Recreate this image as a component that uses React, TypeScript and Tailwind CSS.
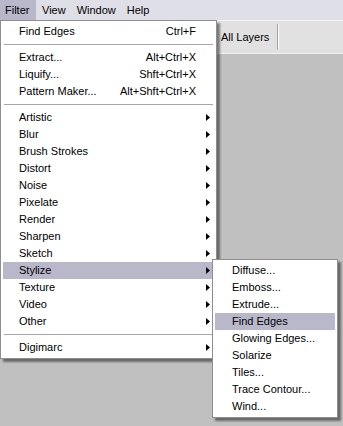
import React from 'react';

type Item =
  | { kind: 'item'; label: string; shortcut?: string; sub?: boolean; active?: boolean }
  | { kind: 'sep' };

const mainItems: Item[] = [
  { kind: 'item', label: 'Find Edges', shortcut: 'Ctrl+F' },
  { kind: 'sep' },
  { kind: 'item', label: 'Extract...', shortcut: 'Alt+Ctrl+X' },
  { kind: 'item', label: 'Liquify...', shortcut: 'Shft+Ctrl+X' },
  { kind: 'item', label: 'Pattern Maker...', shortcut: 'Alt+Shft+Ctrl+X' },
  { kind: 'sep' },
  { kind: 'item', label: 'Artistic', sub: true },
  { kind: 'item', label: 'Blur', sub: true },
  { kind: 'item', label: 'Brush Strokes', sub: true },
  { kind: 'item', label: 'Distort', sub: true },
  { kind: 'item', label: 'Noise', sub: true },
  { kind: 'item', label: 'Pixelate', sub: true },
  { kind: 'item', label: 'Render', sub: true },
  { kind: 'item', label: 'Sharpen', sub: true },
  { kind: 'item', label: 'Sketch', sub: true },
  { kind: 'item', label: 'Stylize', sub: true, active: true },
  { kind: 'item', label: 'Texture', sub: true },
  { kind: 'item', label: 'Video', sub: true },
  { kind: 'item', label: 'Other', sub: true },
  { kind: 'sep' },
  { kind: 'item', label: 'Digimarc', sub: true },
];

const stylizeItems = [
  'Diffuse...',
  'Emboss...',
  'Extrude...',
  'Find Edges',
  'Glowing Edges...',
  'Solarize',
  'Tiles...',
  'Trace Contour...',
  'Wind...',
];

function Arrow() {
  return (
    <svg width="4" height="7" viewBox="0 0 4 7" className="shrink-0">
      <path d="M0 0 L4 3.5 L0 7 Z" fill="#000" />
    </svg>
  );
}

function MenuRow({ item }: { item: Item }) {
  if (item.kind === 'sep') {
    return (
      <div className="h-[9px] flex items-center px-[1px]">
        <div className="w-full h-[1px] bg-[#a6a6a6]" />
      </div>
    );
  }
  return (
    <div
      className={`h-[17px] flex items-center pl-[16px] ${item.sub ? 'pr-[4px]' : 'pr-[18px]'} ${
        item.active ? 'bg-[#b9b8cb]' : ''
      }`}
    >
      <span className="flex-1 whitespace-nowrap">{item.label}</span>
      {item.shortcut && <span className="whitespace-nowrap">{item.shortcut}</span>}
      {item.sub && <Arrow />}
    </div>
  );
}

export default function App() {
  return (
    <div
      className="relative w-[343px] h-[426px] overflow-hidden flex flex-col bg-[#c0c0c0] text-black text-[11px] leading-none"
      style={{ fontFamily: '"Liberation Sans", Arial, sans-serif' }}
    >
      {/* Menu bar */}
      <div className="h-[20px] flex items-stretch bg-[#dfdfe7]">
        <div className="w-[36px] flex items-center pl-[5px] bg-[#b9b8cb]">Filter</div>
        <div className="flex items-center pl-[6px]">View</div>
        <div className="flex items-center pl-[11px]">Window</div>
        <div className="flex items-center pl-[11px]">Help</div>
      </div>

      {/* Options bar */}
      <div className="h-[34px] flex items-center bg-[#e1e1e1] border-t border-[#f4f4f4] border-b border-b-[#f0f0f0] pl-[221px]">
        <span className="whitespace-nowrap">All Layers</span>
        <div className="ml-[8px] h-[26px] w-[2px] border-l border-[#a0a0a0] border-r border-r-white" />
      </div>

      {/* Canvas area */}
      <div className="flex-1 bg-[#c0c0c0]" />

      {/* Filter menu */}
      <div className="absolute left-0 top-[20px] w-[217px] bg-white border border-[#8e8e8e] py-[2px] px-[2px] shadow-[3px_3px_2px_rgba(0,0,0,0.45)]">
        {mainItems.map((item, i) => (
          <MenuRow key={i} item={item} />
        ))}
      </div>

      {/* Stylize submenu */}
      <div className="absolute left-[212px] top-[259px] w-[126px] bg-white border border-[#8e8e8e] py-[2px] px-[2px] shadow-[3px_3px_2px_rgba(0,0,0,0.45)]">
        {stylizeItems.map((label) => (
          <div
            key={label}
            className={`h-[17px] flex items-center pl-[17px] whitespace-nowrap ${
              label === 'Find Edges' ? 'bg-[#b9b8cb]' : ''
            }`}
          >
            {label}
          </div>
        ))}
      </div>
    </div>
  );
}
